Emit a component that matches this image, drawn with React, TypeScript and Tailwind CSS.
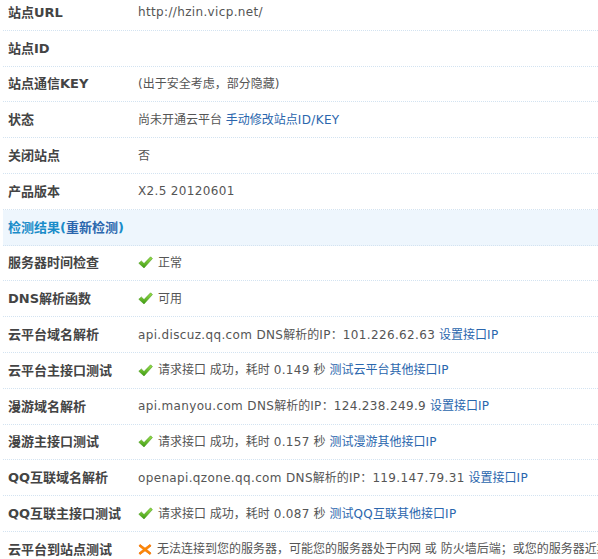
import React from 'react';

const font = { fontFamily: '"DejaVu Sans", "Noto Sans CJK SC", sans-serif' };

// 绿色对勾
const CheckIcon = () => (
  <svg width="15" height="13" viewBox="0 0 15 13" className="mr-[5px] shrink-0">
    <defs>
      <linearGradient id="ok" x1="0" y1="0" x2="0" y2="1">
        <stop offset="0" stopColor="#9be04a" />
        <stop offset="1" stopColor="#3c9a12" />
      </linearGradient>
    </defs>
    <path d="M0.8 7.2 L3.4 5 L6 7.6 L12.6 0.8 L14.4 2.6 L6 12 Z" fill="url(#ok)" stroke="#4a9a1e" strokeWidth="0.6" />
  </svg>
);

// 橙色叉
const CrossIcon = () => (
  <svg width="14" height="13" viewBox="0 0 14 13" className="mr-[5px] shrink-0">
    <path d="M2 1.5 L7 5.2 L12 1.5 L13 3 L8.6 6.5 L13 10 L12 11.5 L7 7.8 L2 11.5 L1 10 L5.4 6.5 L1 3 Z" fill="#ff8a00" stroke="#f07000" strokeWidth="0.8" />
  </svg>
);

// 拉丁字符稍宽一点
const L = ({ children }: { children: React.ReactNode }) => (
  <span className="tracking-[0.35px]">{children}</span>
);

const Link = ({ children }: { children: React.ReactNode }) => (
  <span className="text-[#2a66ad]">{children}</span>
);

type Row = { label: string; icon?: 'ok' | 'fail'; value?: React.ReactNode };

const top: Row[] = [
  { label: '站点URL', value: <L>http://hzin.vicp.net/</L> },
  { label: '站点ID' },
  { label: '站点通信KEY', value: '(出于安全考虑，部分隐藏)' },
  { label: '状态', value: <>尚未开通云平台 <Link>手动修改站点<L>ID/KEY</L></Link></> },
  { label: '关闭站点', value: '否' },
  { label: '产品版本', value: <L>X2.5 20120601</L> },
];

const bottom: Row[] = [
  { label: '服务器时间检查', icon: 'ok', value: '正常' },
  { label: 'DNS解析函数', icon: 'ok', value: '可用' },
  { label: '云平台域名解析', value: <><L>api.discuz.qq.com DNS</L>解析的<L>IP</L>：<L>101.226.62.63</L> <Link>设置接口<L>IP</L></Link></> },
  { label: '云平台主接口测试', icon: 'ok', value: <>请求接口 成功，耗时 <L>0.149</L> 秒 <Link>测试云平台其他接口<L>IP</L></Link></> },
  { label: '漫游域名解析', value: <><L>api.manyou.com DNS</L>解析的<L>IP</L>：<L>124.238.249.9</L> <Link>设置接口<L>IP</L></Link></> },
  { label: '漫游主接口测试', icon: 'ok', value: <>请求接口 成功，耗时 <L>0.157</L> 秒 <Link>测试漫游其他接口<L>IP</L></Link></> },
  { label: 'QQ互联域名解析', value: <><L>openapi.qzone.qq.com DNS</L>解析的<L>IP</L>：<L>119.147.79.31</L> <Link>设置接口<L>IP</L></Link></> },
  { label: 'QQ互联主接口测试', icon: 'ok', value: <>请求接口 成功，耗时 <L>0.087</L> 秒 <Link>测试<L>QQ</L>互联其他接口<L>IP</L></Link></> },
  {
    label: '云平台到站点测试',
    icon: 'fail',
    value: '无法连接到您的服务器，可能您的服务器处于内网 或 防火墙后端；或您的服务器近期无法访问',
  },
];

const TableRow = ({ row }: { row: Row }) => (
  <div className="flex items-center h-[34.8px] border-b border-dotted border-[#d3e3f1] box-content">
    <div className="w-[135px] shrink-0 pl-[5px] font-bold text-[13px] text-[#444]">{row.label}</div>
    <div className="flex items-center whitespace-nowrap text-[#555]">
      {row.icon === 'ok' && <CheckIcon />}
      {row.icon === 'fail' && <CrossIcon />}
      <span className="whitespace-pre">{row.value}</span>
    </div>
  </div>
);

export default function App() {
  return (
    <div className="w-[598px] h-[559px] overflow-hidden bg-white text-[12px] leading-none" style={font}>
      <div className="mt-[-5px] ml-[3px]">
        {top.map((r) => (
          <TableRow key={r.label} row={r} />
        ))}
        <div className="flex items-center h-[34.8px] bg-[#eef6fd] border-b border-dotted border-[#d3e3f1] box-content pl-[5px] font-bold text-[13px]">
          <span className="text-[#1a8cc9]">检测结果(</span>
          <span className="text-[#2a66ad]">重新检测</span>
          <span className="text-[#1a8cc9]">)</span>
        </div>
        {bottom.map((r) => (
          <TableRow key={r.label} row={r} />
        ))}
      </div>
    </div>
  );
}
